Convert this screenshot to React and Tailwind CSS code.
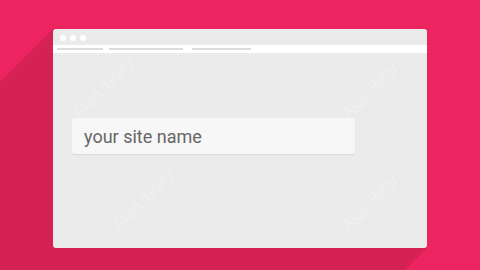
const Watermark = ({ className }) => (
  <span
    className={`absolute w-[90px] text-center leading-[20px] -rotate-45 text-[16px] text-white/40 select-none pointer-events-none ${className}`}
    style={{ fontFamily: "'Open Sans', sans-serif", fontWeight: 300 }}
  >
    AkaiLibrary
  </span>
);

export default function App() {
  return (
    <div className="relative w-[480px] h-[270px] overflow-hidden bg-[#ec2560]" style={{ fontFamily: "Roboto, sans-serif" }}>
      {/* long shadow */}
      <svg className="absolute inset-0" width="480" height="270" viewBox="0 0 480 270">
        <polygon points="53,29 -347,429 27,648 427,248" fill="#d52252" />
      </svg>

      <div className="relative pt-[29px] pl-[53px]">
        <div className="relative w-[374px] h-[219px] rounded-[3px] bg-[#ebebeb] overflow-hidden flex flex-col">
          <div className="h-[16px] flex items-center gap-[4px] pl-[7px] pt-[1px]">
            <span className="w-[6px] h-[6px] rounded-full bg-white" />
            <span className="w-[6px] h-[6px] rounded-full bg-white" />
            <span className="w-[6px] h-[6px] rounded-full bg-white" />
          </div>
          <div className="h-[8px] bg-white flex items-center pl-[4px] gap-[6px]">
            <span className="w-[46px] h-[2px] bg-[#dcdcdc]" />
            <span className="w-[74px] h-[2px] bg-[#dcdcdc]" />
            <span className="w-[59px] h-[2px] bg-[#dcdcdc] ml-[3px]" />
          </div>
          <div className="flex-1 pt-[65px] pl-[19px]">
            <div className="relative z-10 w-[283px] h-[36px] rounded-[3px] bg-[#f7f7f7] shadow-[0_1px_1px_rgba(0,0,0,0.08)] flex items-center pl-[12px]">
              <span className="text-[18px] text-[#666666]">your site name</span>
            </div>
          </div>
          <Watermark className="left-[5px] top-[48px]" />
          <Watermark className="left-[275px] top-[48px]" />
          <Watermark className="left-[45px] top-[160px]" />
          <Watermark className="left-[275px] top-[160px]" />
        </div>
      </div>
    </div>
  );
}
